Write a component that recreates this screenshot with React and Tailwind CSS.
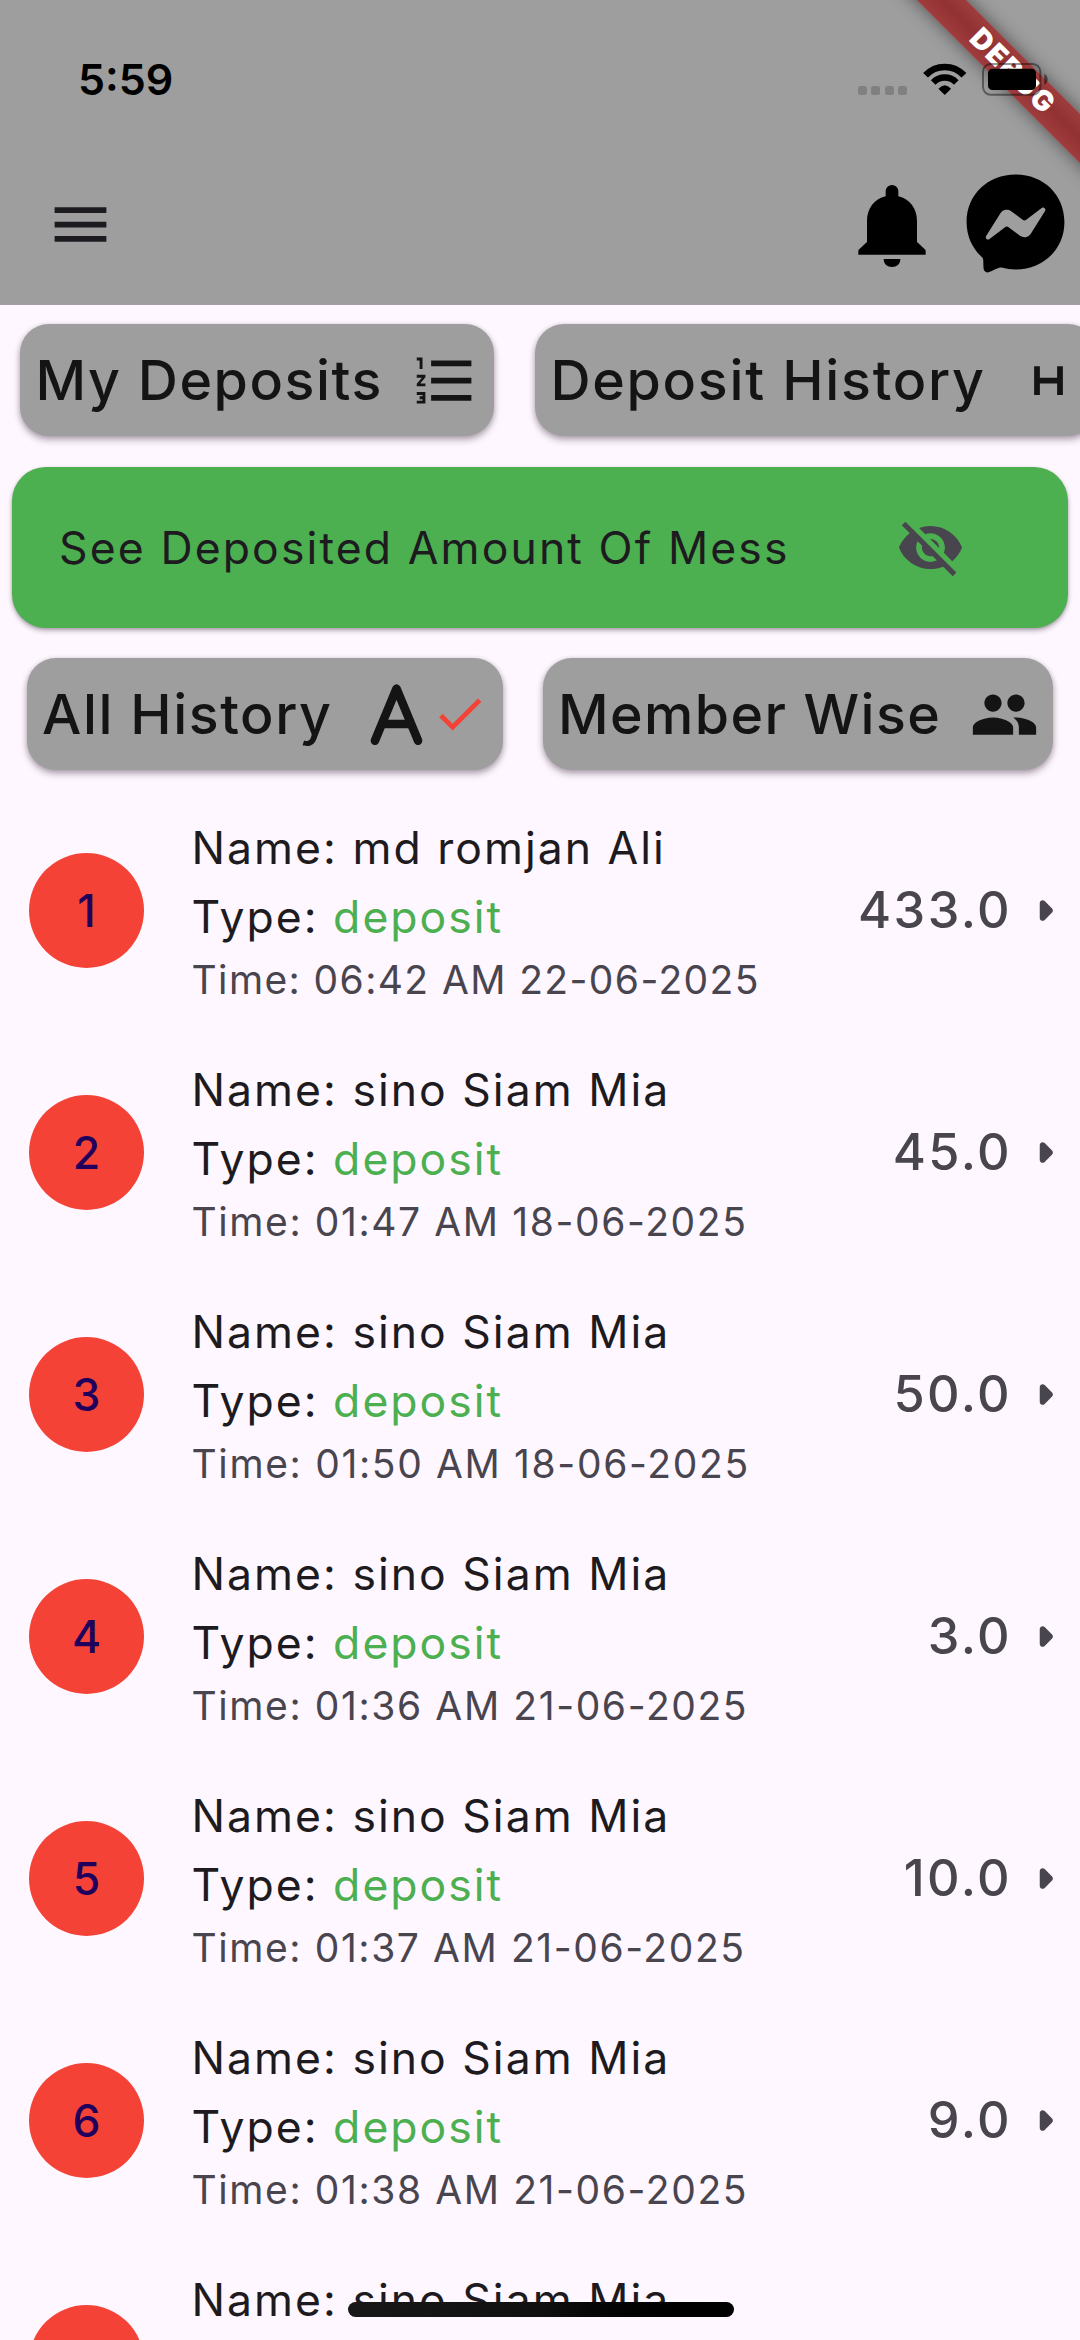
import React from "react";

const deposits = [
  { name: "md romjan Ali", time: "06:42 AM 22-06-2025", amount: "433.0", spacing: "tracking-[1.39px]" },
  { name: "sino Siam Mia", time: "01:47 AM 18-06-2025", amount: "45.0", spacing: "tracking-[1.6px]" },
  { name: "sino Siam Mia", time: "01:50 AM 18-06-2025", amount: "50.0", spacing: "tracking-[1.65px]" },
  { name: "sino Siam Mia", time: "01:36 AM 21-06-2025", amount: "3.0", spacing: "tracking-[1.6px]" },
  { name: "sino Siam Mia", time: "01:37 AM 21-06-2025", amount: "10.0", spacing: "tracking-[1.58px]" },
  { name: "sino Siam Mia", time: "01:38 AM 21-06-2025", amount: "9.0", spacing: "tracking-[1.6px]" },
  { name: "sino Siam Mia", time: "01:39 AM 21-06-2025", amount: "8.0", spacing: "tracking-[1.6px]" },
];

function Icon({ d, className = "size-[69px]" }) {
  return (
    <svg viewBox="0 0 24 24" fill="currentColor" className={`shrink-0 ${className}`}>
      <path d={d} />
    </svg>
  );
}

const MENU = "M3 18h18v-2H3v2zm0-5h18v-2H3v2zm0-7v2h18V6H3z";
const NUMBERED =
  "M2 17h2v.5H3v1h1v.5H2v1h3v-4H2v1zm1-9h1V4H2v1h1v3zm-1 3h1.8L2 13.1v.9h3v-1H3.2L5 10.9V10H2v1zm5-6v2h14V5H7zm0 14h14v-2H7v2zm0-6h14v-2H7v2z";
const H_DATA = "M15 11H9V7H7v10h2v-4h6v4h2V7h-2z";
const EYE_OFF =
  "M12 7c2.76 0 5 2.24 5 5 0 .65-.13 1.26-.36 1.83l2.92 2.92c1.51-1.26 2.7-2.89 3.43-4.75-1.73-4.39-6-7.5-11-7.5-1.4 0-2.74.25-3.98.7l2.16 2.16C10.74 7.13 11.35 7 12 7zM2 4.27l2.28 2.28.46.46C3.08 8.3 1.78 10.02 1 12c1.73 4.39 6 7.5 11 7.5 1.55 0 3.03-.3 4.38-.84l.42.42L19.73 22 21 20.73 3.27 3 2 4.27zM7.53 9.8l1.55 1.55c-.05.21-.08.43-.08.65 0 1.66 1.34 3 3 3 .22 0 .44-.03.65-.08l1.55 1.55c-.67.33-1.41.53-2.2.53-2.76 0-5-2.24-5-5 0-.79.2-1.53.53-2.2zm4.31-.78l3.15 3.15.02-.16c0-1.66-1.34-3-3-3l-.17.01z";
const CHECK = "M9 16.17L4.83 12l-1.42 1.41L9 19 21 7l-1.41-1.41z";
const PEOPLE =
  "M16 11c1.66 0 2.99-1.34 2.99-3S17.66 5 16 5c-1.66 0-3 1.34-3 3s1.34 3 3 3zm-8 0c1.66 0 2.99-1.34 2.99-3S9.66 5 8 5C6.34 5 5 6.34 5 8s1.34 3 3 3zm0 2c-2.33 0-7 1.17-7 3.5V19h14v-2.5c0-2.33-4.67-3.5-7-3.5zm8 0c-.29 0-.62.02-.97.05 1.16.84 1.97 1.97 1.97 3.45V19h6v-2.5c0-2.33-4.67-3.5-7-3.5z";
const ARROW =
  "M11.71 15.29l2.58-2.59c.39-.39.39-1.02 0-1.41l-2.58-2.59C11.08 8.08 10 8.52 10 9.41v5.17c0 .9 1.08 1.34 1.71.71z";

function LetterMark() {
  return (
    <svg viewBox="0 0 24 24" fill="none" stroke="currentColor" strokeLinecap="round" strokeLinejoin="round" className="size-[69px] shrink-0">
      <path strokeWidth="3" d="M4.5 21.1L12 3L19.5 21.1" />
      <path strokeWidth="3" strokeLinecap="butt" d="M6.5 15.3H17.5" />
    </svg>
  );
}

function Bell() {
  return (
    <svg viewBox="0 0 204 246" className="mt-[2px] h-[82px] w-[68px]">
      <path d="M83 34V19a19 19 0 0 1 38 0V34C156 42 177 72 177 107V171L202 194Q203 196 203 200V209H1V200Q1 196 2 194L27 171V107C27 72 48 42 83 34Z" />
      <path d="M77 222H127C127 238 116 246 102 246S77 238 77 222Z" />
    </svg>
  );
}

function Messenger() {
  return (
    <svg viewBox="0 0 512 512" className="-mt-[3px] size-[101px]">
      <path d="M256.55 8C116.52 8 8 110.34 8 248.57c0 72.3 29.71 134.78 78.07 177.94 8.35 7.51 6.63 11.86 8.05 58.23A19.92 19.92 0 0 0 122 502.31c52.91-23.3 53.59-25.14 62.56-22.7C337.85 521.8 504 423.7 504 248.57 504 110.34 396.59 8 256.55 8zm149.24 185.13l-73 115.57a37.37 37.37 0 0 1-53.91 9.93l-58.08-43.47a15 15 0 0 0-18 0l-78.37 59.44c-10.46 7.93-24.16-4.6-17.11-15.67l73-115.57a37.36 37.36 0 0 1 53.91-9.93l58.06 43.46a15 15 0 0 0 18 0l78.41-59.38c10.44-7.98 24.14 4.54 17.09 15.62z" />
    </svg>
  );
}

function StatusIcons() {
  return (
    <div className="relative z-20 flex items-center">
      <div className="mt-[22px] flex gap-[4.5px]">
        {[0, 1, 2, 3].map((i) => (
          <span key={i} className="size-[9px] rounded-[2.5px] bg-[#808080]" />
        ))}
      </div>
      <svg viewBox="0 0 130 96" className="ml-[16px] h-[32px] w-[43.5px]">
        <g fill="none" stroke="#000">
          <path strokeWidth="20" d="M7.4 36.9A79 79 0 0 1 122.6 36.9" />
          <path strokeWidth="19" d="M30.4 58.5A47.5 47.5 0 0 1 99.6 58.5" />
        </g>
        <path d="M65 96L46 77Q65 56 84 77Z" />
      </svg>
      <svg viewBox="0 0 198 99" className="ml-[15px] h-[33px] w-[66px]">
        <rect x="3" y="3" width="172" height="92" rx="23" fill="none" stroke="#000" strokeOpacity=".42" strokeWidth="6" />
        <rect x="18" y="17" width="144" height="64" rx="13" />
        <path fill="#000" fillOpacity=".5" d="M187 33C200 38 200 60 187 65Z" />
      </svg>
    </div>
  );
}

function DebugBanner() {
  return (
    <div className="absolute top-[51.5px] left-[811px] z-10 flex h-[35px] w-[400px] rotate-45 items-center justify-center bg-linear-to-b from-[#9f3d3e] via-[#923132] to-[#9f3d3e] shadow-[0_0_18px_rgba(0,0,0,0.5)]">
      <span className="pl-[5px] text-[28.5px] leading-none font-black tracking-[1.7px] text-white">DEBUG</span>
    </div>
  );
}

function Pill({ label, className, children }) {
  return (
    <button
      className={`flex h-[112px] shrink-0 items-center justify-between rounded-[29px] bg-[#9e9e9e] pr-[14px] pl-[15.5px] text-[55.5px] leading-none font-medium whitespace-nowrap text-[#141414] shadow-[0_4px_7px_rgba(30,10,30,0.3),0_1px_5px_rgba(30,10,30,0.16)] ${className}`}
    >
      <span>{label}</span>
      <span className="flex items-center">{children}</span>
    </button>
  );
}

function DepositRow({ index, name, time, amount, spacing }) {
  return (
    <li className="flex h-[242px] shrink-0 items-center pl-[29px]">
      <div className="flex size-[115px] shrink-0 items-center justify-center rounded-full bg-[#f44336] pt-[2px] text-[44.5px] font-medium text-[#21005d]">
        {index}
      </div>
      <div className="mt-[2px] ml-[47.5px] flex flex-1 flex-col whitespace-nowrap text-[#1d1b20]">
        <span className="text-[44.5px] leading-[69px] tracking-[2.02px]">Name: {name}</span>
        <span className="text-[44.5px] leading-[69px] tracking-[2.02px]">
          Type: <span className="text-[#4caf50]">deposit</span>
        </span>
        <span className={`text-[39px] leading-[56px] text-[#49454f] ${spacing}`}>Time: {time}</span>
      </div>
      <div className="flex items-center text-[#49454f]">
        <span className="-mr-[1px] text-[50.5px] leading-none font-medium tracking-[2.4px]">{amount}</span>
        <Icon d={ARROW} />
      </div>
    </li>
  );
}

export default function App() {
  return (
    <div className="relative flex h-[2340px] w-[1080px] flex-col overflow-hidden bg-[#fef7ff] font-[Inter,sans-serif]">
      <header className="h-[305px] shrink-0 bg-[#9e9e9e]">
        <div className="flex h-[158px] items-center justify-between pr-[32.5px] pl-[78px]">
          <span className="text-[43px] leading-none font-semibold text-black">5:59</span>
          <StatusIcons />
        </div>
        <div className="flex h-[133px] items-center pr-[14.5px] pl-[46px]">
          <Icon d={MENU} className="size-[69px] text-[#1d1b20]" />
          <div className="ml-auto flex items-center gap-[39px] text-black">
            <Bell />
            <Messenger />
          </div>
        </div>
      </header>
      <DebugBanner />

      <main className="flex flex-1 flex-col">
        <div className="mt-[19px] flex gap-[41px] pl-[20px]">
          <Pill label="My Deposits" className="w-[474px] tracking-[1.54px]">
            <Icon d={NUMBERED} />
          </Pill>
          <Pill label="Deposit History" className="w-[562px] tracking-[1.72px]">
            <Icon d={H_DATA} />
          </Pill>
        </div>

        <div className="mx-[12px] mt-[31px] flex h-[161px] shrink-0 items-center justify-between rounded-[34px] bg-[#4caf50] pr-[103px] pl-[47px] shadow-[0_3px_5px_rgba(30,10,30,0.28),0_1px_3px_rgba(30,10,30,0.18)]">
          <span className="mt-[2px] text-[44.5px] leading-none tracking-[2.12px] text-[#1d1b20]">See Deposited Amount Of Mess</span>
          <Icon d={EYE_OFF} className="size-[69px] text-[#49454f]" />
        </div>

        <div className="mt-[30px] flex gap-[40px] pl-[26.5px]">
          <Pill label="All History" className="w-[476px] tracking-[1.55px]">
            <LetterMark />
            <Icon d={CHECK} className="size-[57.6px] text-[#f44336]" />
          </Pill>
          <Pill label="Member Wise" className="w-[510.5px] tracking-[1.4px]">
            <Icon d={PEOPLE} />
          </Pill>
        </div>

        <ul className="mt-[19px] flex flex-col">
          {deposits.map((row, i) => (
            <DepositRow key={i} index={i + 1} {...row} />
          ))}
        </ul>
      </main>

      <div className="absolute top-[2302px] left-[347.5px] h-[15px] w-[386px] rounded-full bg-linear-to-r from-[#181818] via-[#101010] to-black" />
    </div>
  );
}
